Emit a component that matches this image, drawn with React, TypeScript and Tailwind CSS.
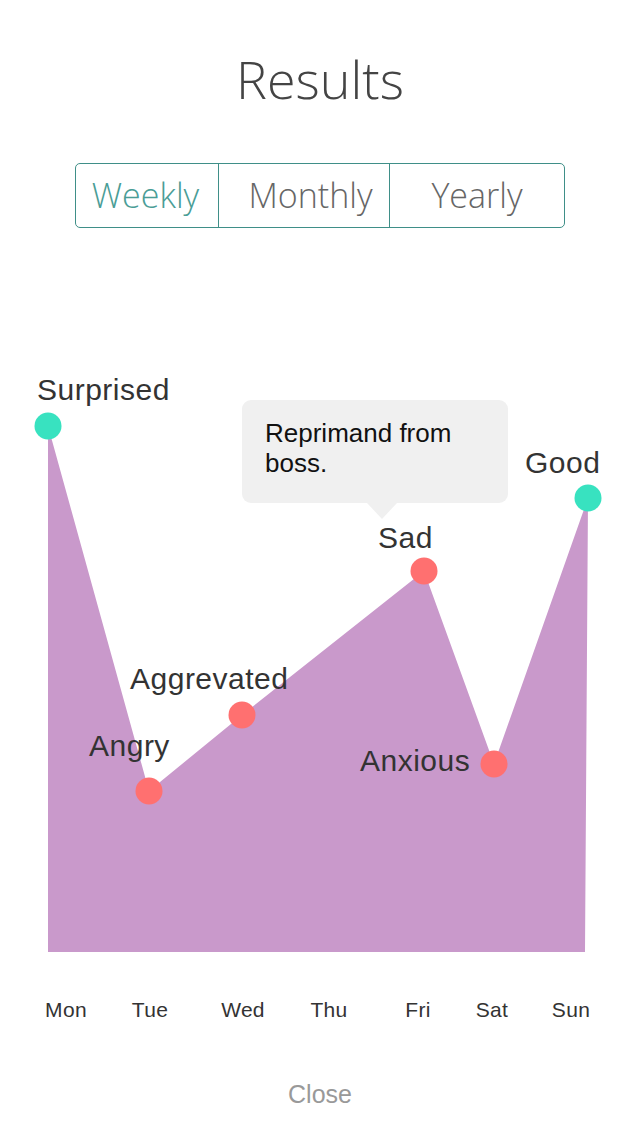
import React from "react";

const sans = { fontFamily: '"Liberation Sans", Arial, sans-serif' };

const days: { label: string; cls: string }[] = [
  { label: "Mon", cls: "w-[80px]" },
  { label: "Tue", cls: "w-[88px]" },
  { label: "Wed", cls: "w-[98px]" },
  { label: "Thu", cls: "w-[74px]" },
  { label: "Fri", cls: "w-[104px]" },
  { label: "Sat", cls: "w-[44px]" },
  { label: "Sun", cls: "w-[114px]" },
];

export default function App() {
  return (
    <div
      className="w-[640px] h-[1136px] bg-white flex flex-col items-center overflow-hidden"
      style={sans}
    >
      <h1
        className="mt-[49px] text-[52px] leading-[60px] font-light text-[#444444]"
        style={{ fontFamily: '"Open Sans", sans-serif' }}
      >
        Results
      </h1>

      <div
        className="mt-[54px] h-[65px] w-[490px] border border-[#3f8f88] rounded-[5px] flex"
        style={{ fontFamily: '"Open Sans", sans-serif' }}
      >
        <div className="w-[142px] flex items-center justify-center pr-[3px] text-[34px] font-light text-[#4a9d96]">
          Weekly
        </div>
        <div className="w-[171px] border-l border-[#3f8f88] flex items-center justify-center pl-[13px] text-[34px] font-light text-[#666666]">
          Monthly
        </div>
        <div className="flex-1 border-l border-[#3f8f88] flex items-center justify-center text-[34px] font-light text-[#666666]">
          Yearly
        </div>
      </div>

      <div className="relative w-full h-[752px] text-[30px] leading-none tracking-[0.5px] text-[#333333]">
        <svg
          className="absolute inset-0"
          width="640"
          height="752"
          viewBox="0 0 640 752"
        >
          <polygon
            points="48,198 149,563 242,487 424,343 494,536 588,270 585,724 48,724"
            fill="#c999cb"
          />
          <circle cx="48" cy="198" r="13.5" fill="#38e2c0" />
          <circle cx="149" cy="563" r="13.5" fill="#ff7070" />
          <circle cx="242" cy="487" r="13.5" fill="#ff7070" />
          <circle cx="424" cy="343" r="13.5" fill="#ff7070" />
          <circle cx="494" cy="536" r="13.5" fill="#ff7070" />
          <circle cx="588" cy="270" r="13.5" fill="#38e2c0" />
        </svg>

        <span className="absolute left-[37px] top-[147px] whitespace-nowrap">Surprised</span>
        <span className="absolute left-[525px] top-[220px] whitespace-nowrap">Good</span>
        <span className="absolute left-[378px] top-[295px] whitespace-nowrap">Sad</span>
        <span className="absolute left-[130px] top-[436px] whitespace-nowrap">Aggrevated</span>
        <span className="absolute left-[89px] top-[503px] whitespace-nowrap">Angry</span>
        <span className="absolute left-[360px] top-[518px] whitespace-nowrap">Anxious</span>

        <div className="absolute left-[242px] top-[172px] w-[266px] h-[103px] bg-[#f0f0f0] rounded-[9px] pl-[23px] pt-[18px] tracking-normal">
          <p className="text-[26px] leading-[30px] text-[#111111] w-[220px]">
            Reprimand from boss.
          </p>
          <div className="absolute left-[125px] top-[103px] w-0 h-0 border-l-[15px] border-r-[15px] border-t-[16px] border-l-transparent border-r-transparent border-t-[#f0f0f0]" />
        </div>
      </div>

      <div className="w-full flex pl-[26px] mt-[19px] h-[21px] text-[21px] leading-none tracking-[0.3px] text-[#333333]">
        {days.map((d) => (
          <span key={d.label} className={`${d.cls} text-center`}>
            {d.label}
          </span>
        ))}
      </div>

      <button className="mt-[62px] text-[25px] leading-none text-[#999999]">
        Close
      </button>
    </div>
  );
}
